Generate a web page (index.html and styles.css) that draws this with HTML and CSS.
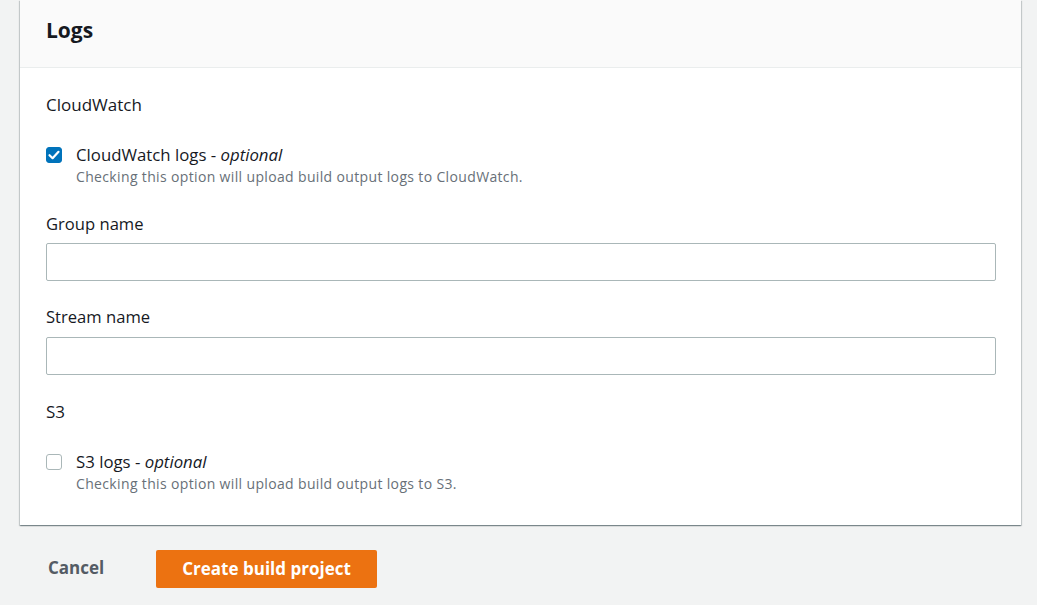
FILE: index.html
```html
<!DOCTYPE html>
<html lang="en">
<head>
<meta charset="utf-8">
<title>Logs</title>
<link rel="stylesheet" href="styles.css">
</head>
<body>
<div class="page">
  <section class="panel">
    <header class="panel-header">
      <h2 class="panel-title">Logs</h2>
    </header>
    <div class="panel-body">
      <div class="section-label">CloudWatch</div>
      <label class="check-row">
        <span class="checkbox checked">
          <svg viewBox="0 0 16 16" width="16" height="16"><path d="M3.5 8.2 L6.6 11.2 L12.5 4.8" fill="none" stroke="#fff" stroke-width="2.2" stroke-linecap="round" stroke-linejoin="round"/></svg>
        </span>
        <span class="check-text">
          <span class="check-label">CloudWatch logs - <em>optional</em></span>
          <span class="check-desc">Checking this option will upload build output logs to CloudWatch.</span>
        </span>
      </label>
      <div class="field">
        <div class="field-label">Group name</div>
        <input class="text-input" type="text">
      </div>
      <div class="field field-second">
        <div class="field-label">Stream name</div>
        <input class="text-input" type="text">
      </div>
      <div class="section-label section-s3">S3</div>
      <label class="check-row">
        <span class="checkbox"></span>
        <span class="check-text">
          <span class="check-label">S3 logs - <em>optional</em></span>
          <span class="check-desc">Checking this option will upload build output logs to S3.</span>
        </span>
      </label>
    </div>
  </section>
  <div class="actions">
    <button class="btn-link" type="button">Cancel</button>
    <button class="btn-primary" type="button">Create build project</button>
  </div>
</div>
</body>
</html>
```
FILE: styles.css
```css
* { box-sizing: border-box; }
html, body {
  margin: 0;
  padding: 0;
  background: #f2f3f3;
  font-family: "Open Sans", "Noto Sans", Arial, sans-serif;
  color: #16191f;
}
.page {
  padding: 0 16px 0 20px;
  width: 1037px;
}
.panel {
  width: 1001px;
  background: #fff;
  box-shadow: 0 1px 1px 0 rgba(0,28,36,.3), 1px 1px 1px 0 rgba(0,28,36,.15), -1px 1px 1px 0 rgba(0,28,36,.15);
}
.panel-header {
  height: 68px;
  background: #fafafa;
  border-bottom: 1px solid #eaeded;
  display: flex;
  align-items: center;
  padding: 0 26px 8px;
}
.panel-title {
  margin: 0;
  font-size: 21px;
  font-weight: 700;
  line-height: 24px;
}
.panel-body {
  padding: 26px 25px 31px 26px;
}
.section-label {
  font-size: 17px;
  line-height: 22px;
}
.section-s3 { margin-top: 26px; }
.check-row {
  display: flex;
  gap: 14px;
  margin-top: 28px;
  cursor: pointer;
}
.checkbox {
  flex: none;
  width: 16px;
  height: 16px;
  margin-top: 3px;
  border: 1px solid #aab7b8;
  border-radius: 3px;
  background: #fff;
  display: flex;
}
.checkbox.checked {
  border-color: #0073bb;
  background: #0073bb;
}
.checkbox svg { margin: -1px; }
.check-text { display: flex; flex-direction: column; }
.check-label {
  font-size: 16.8px;
  line-height: 22px;
}
.check-label em { font-style: italic; }
.check-desc {
  font-size: 14px;
  line-height: 20px;
  padding-top: 1px;
  color: #687078;
  letter-spacing: 0.35px;
}
.field { margin-top: 26px; }
.field-second { margin-top: 25px; }
.field-label {
  font-size: 16.6px;
  line-height: 22px;
  margin-bottom: 8px;
}
.field-second .field-label { margin-bottom: 9px; }
.text-input {
  display: block;
  width: 100%;
  height: 38px;
  border: 1px solid #aab7b8;
  border-radius: 2px;
  background: #fff;
  font: inherit;
  padding: 0 10px;
  outline: none;
}
.actions {
  display: flex;
  align-items: center;
  gap: 52px;
  margin-top: 25px;
  padding-left: 28px;
}
.btn-link {
  border: none;
  background: none;
  font-family: inherit;
  font-size: 17px;
  font-weight: 700;
  color: #545b64;
  padding: 0 0 3px;
  height: 38px;
}
.btn-primary {
  border: none;
  background: #ec7211;
  color: #fff;
  font-family: inherit;
  font-size: 17px;
  font-weight: 700;
  height: 38px;
  padding: 0 26px 1px;
  border-radius: 2px;
}
```
